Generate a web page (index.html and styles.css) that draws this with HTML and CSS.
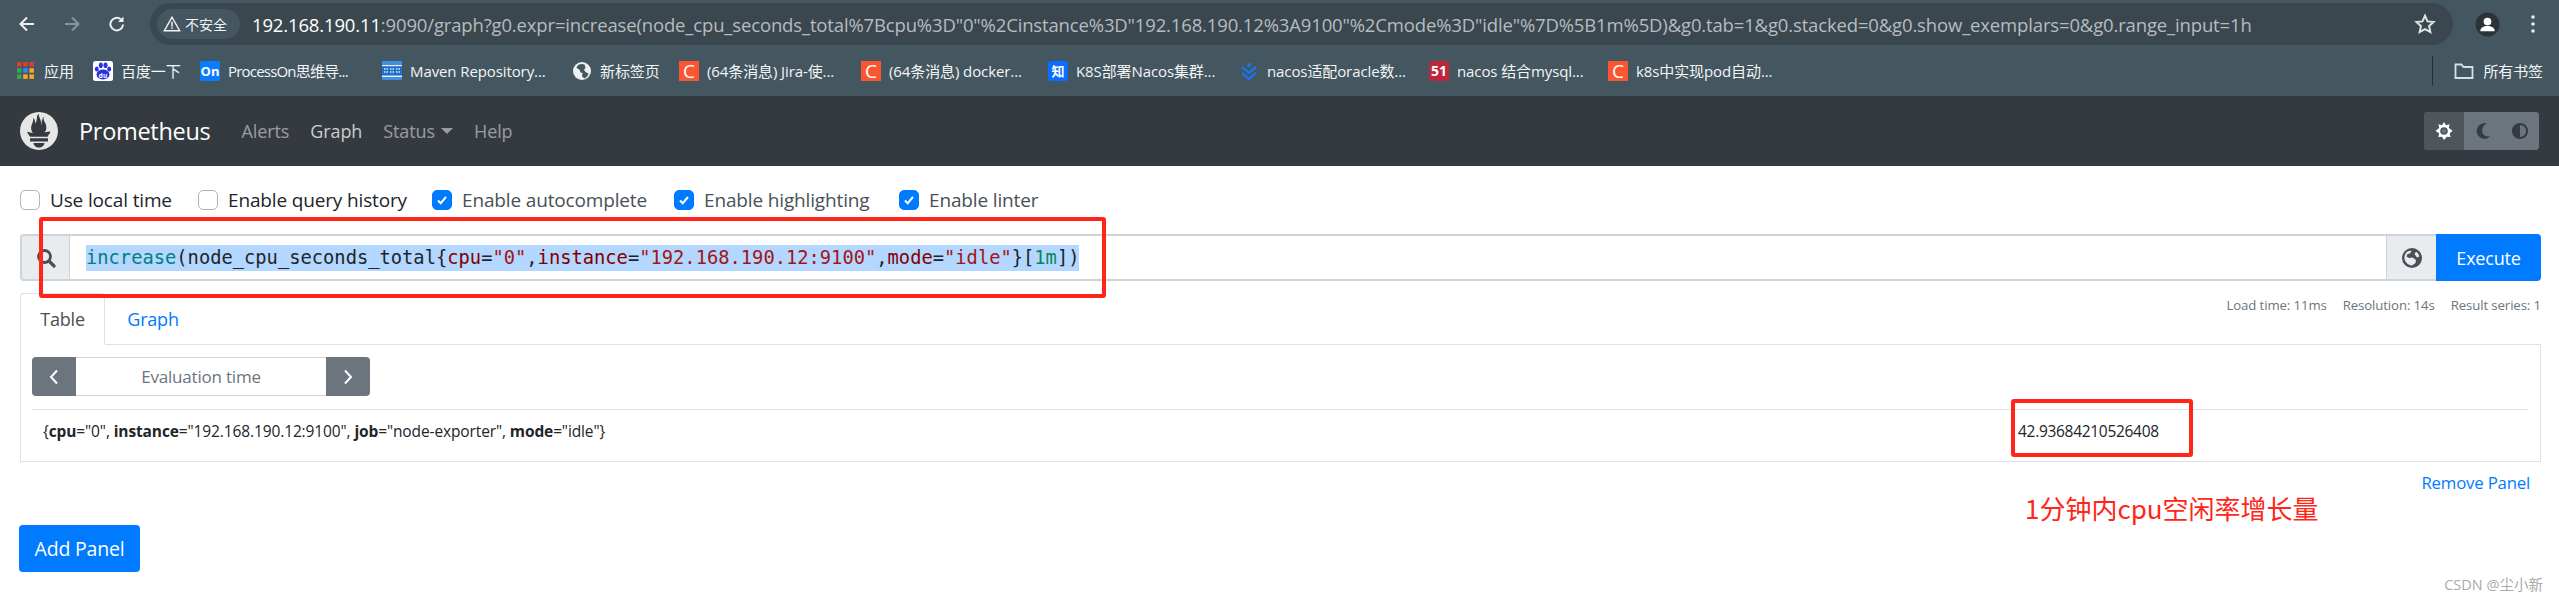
FILE: index.html
```html
<!DOCTYPE html>
<html lang="zh">
<head>
<meta charset="utf-8">
<title>Prometheus Time Series Collection and Processing Server</title>
<link rel="stylesheet" href="styles.css">
</head>
<body>
<header class="chrome-toolbar">
  <div class="chrome-nav">
    <svg class="chrome-icon" viewBox="0 0 20 20"><path d="M17 10H4M10 3.500 3.500 10l6.500 6.500" fill="none" stroke="#eef1f2" stroke-width="2"/></svg>
    <svg class="chrome-icon" viewBox="0 0 20 20"><path d="M3 10h13M10 3.500l6.500 6.500-6.500 6.500" fill="none" stroke="#8a9499" stroke-width="2"/></svg>
    <svg class="chrome-icon" viewBox="0 0 20 20"><path d="M16 10.500a6.300 6.300 0 1 1-2-5" fill="none" stroke="#eef1f2" stroke-width="2"/><path d="M16.500 2.500v5.500h-5.500z" fill="#eef1f2"/></svg>
  </div>
  <div class="omnibox">
    <div class="secure-chip">
      <svg class="warn-icon" viewBox="0 0 20 20"><path d="M10 2.500 18.500 17.500H1.500z" fill="none" stroke="#f1f3f4" stroke-width="1.600"/><path d="M9.200 7.500h1.600v5.500H9.200zM9.200 14h1.600v1.600H9.200z" fill="#f1f3f4"/></svg>
      <span>不安全</span>
    </div>
    <div class="url"><span class="url-host">192.168.190.11</span>:9090/graph?g0.expr=increase(node_cpu_seconds_total%7Bcpu%3D"0"%2Cinstance%3D"192.168.190.12%3A9100"%2Cmode%3D"idle"%7D%5B1m%5D)&amp;g0.tab=1&amp;g0.stacked=0&amp;g0.show_exemplars=0&amp;g0.range_input=1h</div>
    <svg class="star-icon" viewBox="0 0 20 20"><path d="M10 2.500l2.300 5.100 5.500.6-4.100 3.700 1.200 5.500L10 14.600l-4.900 2.800 1.200-5.500-4.100-3.700 5.500-.6z" fill="none" stroke="#dfe3e5" stroke-width="1.800"/></svg>
  </div>
  <div class="chrome-end">
    <svg class="avatar" viewBox="0 0 26 26"><circle cx="13" cy="13" r="12.500" fill="#2b3338"/><circle cx="13" cy="10" r="4" fill="#fff"/><path d="M5.500 20c0-4 3.500-5.500 7.500-5.500s7.500 1.500 7.500 5.500z" fill="#fff"/></svg>
    <svg class="menu-dots" viewBox="0 0 6 22"><circle cx="3" cy="4" r="1.800" fill="#e8eaed"/><circle cx="3" cy="11" r="1.800" fill="#e8eaed"/><circle cx="3" cy="18" r="1.800" fill="#e8eaed"/></svg>
  </div>
</header>

<nav class="bookmarks">
  <div class="bm-list">
    <a class="bm"><svg class="bm-apps" viewBox="0 0 17 17"><rect x="0" y="0" width="4.500" height="4.500" fill="#e53935"/><rect x="6.200" y="0" width="4.500" height="4.500" fill="#e53935"/><rect x="12.400" y="0" width="4.500" height="4.500" fill="#e53935"/><rect x="0" y="6.200" width="4.500" height="4.500" fill="#34a853"/><rect x="6.200" y="6.200" width="4.500" height="4.500" fill="#2d8cf0"/><rect x="12.400" y="6.200" width="4.500" height="4.500" fill="#f9a825"/><rect x="0" y="12.400" width="4.500" height="4.500" fill="#34a853"/><rect x="6.200" y="12.400" width="4.500" height="4.500" fill="#f9a825"/><rect x="12.400" y="12.400" width="4.500" height="4.500" fill="#f9a825"/></svg><span>应用</span></a>
    <a class="bm"><svg class="bm-icon" viewBox="0 0 20 20"><rect width="20" height="20" rx="2.500" fill="#fff"/><ellipse cx="10" cy="13.500" rx="6.500" ry="5" fill="#2932e1"/><ellipse cx="3.800" cy="8" rx="2" ry="2.600" fill="#2932e1"/><ellipse cx="7.800" cy="4.200" rx="2" ry="2.800" fill="#2932e1"/><ellipse cx="12.500" cy="4.200" rx="2" ry="2.800" fill="#2932e1"/><ellipse cx="16.200" cy="8" rx="2" ry="2.600" fill="#2932e1"/><text class="du" x="10" y="16.500" text-anchor="middle">du</text></svg><span>百度一下</span></a>
    <a class="bm"><span class="tile tile-blue">On</span><span class="bm-tight">ProcessOn思维导...</span></a>
    <a class="bm"><svg class="bm-icon" viewBox="0 0 20 20"><rect y="0" width="20" height="4" fill="#3f8fe0"/><rect y="4" width="20" height="1.500" fill="#e6eef5"/><rect y="5.500" width="20" height="9" fill="#1a6fd0"/><path d="M2 8h4M8 8h4M14 8h4M2 11h4M8 11h4M14 11h4" stroke="#a5cdf2" stroke-width="2" stroke-dasharray="1.500 1"/><rect y="14.500" width="20" height="1.500" fill="#e6eef5"/><rect y="16" width="20" height="3" fill="#3f8fe0"/></svg><span>Maven Repository...</span></a>
    <a class="bm"><svg class="bm-icon" viewBox="0 0 20 20"><circle cx="10" cy="10" r="9" fill="#eef1f2"/><path d="M10 3c-3 0-5 1.500-5.500 4l3 1.500 1 3 2 .5-.5 3.500 2.500 2c2-1 3.500-3 4-5l-3-1.500-1.500-2 1.500-2.500-1-3z" fill="#44565f"/></svg><span>新标签页</span></a>
    <a class="bm"><span class="tile tile-orange">C</span><span>(64条消息) Jira-使...</span></a>
    <a class="bm"><span class="tile tile-orange">C</span><span>(64条消息) docker...</span></a>
    <a class="bm"><span class="tile tile-zhihu">知</span><span>K8S部署Nacos集群...</span></a>
    <a class="bm"><svg class="bm-icon" viewBox="0 0 20 20"><path d="M3 6l7 6 7-6M3 12l7 6 7-6" fill="none" stroke="#1b74e8" stroke-width="2.400"/><circle cx="10" cy="4" r="2" fill="#1b74e8"/></svg><span>nacos适配oracle数...</span></a>
    <a class="bm"><span class="tile tile-red">51</span><span>nacos 结合mysql...</span></a>
    <a class="bm"><span class="tile tile-orange">C</span><span>k8s中实现pod自动...</span></a>
  </div>
  <div class="bm-all">
    <svg class="folder" viewBox="0 0 20 20"><path d="M1.500 3.500h6l2 2.500h9v11h-17z" fill="none" stroke="#d9dee0" stroke-width="1.800"/></svg>
    <span>所有书签</span>
  </div>
</nav>

<nav class="navbar">
  <svg class="logo" viewBox="0 0 100 100"><path fill="#e6e6e6" fill-rule="evenodd" d="M50 0C22.400 0 0 22.400 0 50s22.400 50 50 50 50-22.400 50-50S77.600 0 50 0zm0 93.600c-7.900 0-14.300-5.300-14.300-11.800h28.600c0 6.500-6.400 11.800-14.300 11.800zm23.600-15.700H26.400v-8.600h47.200v8.600zm-.2-13H26.500c-.2-.2-.3-.4-.5-.5-4.800-5.900-6-9-7.100-12.100 0 0 5.900 1.200 10 2.200 0 0 2.100.5 5.300 1.100-3.100-3.600-4.900-8.200-4.900-12.900 0-10.400 8-19.500 5.100-26.800 2.800.2 5.800 5.900 6 14.800 2.900-4 4.200-11.400 4.200-15.900 0-4.600 3-10 6.100-10.200-2.700 4.400.7 8.200 3.700 17.600 1.100 3.500 1 9.400 1.900 13.200.3-7.800 1.600-19.100 6.600-23.100-2.200 5 .3 11.200 2 14.200 2.700 4.700 4.400 8.300 4.400 15 0 4.500-1.700 8.800-4.500 12.200 3.200-.6 5.500-1.100 5.500-1.100l10.200-2c-.1 0-1.600 6.200-7.200 12.400z"/></svg>
  <a class="brand">Prometheus</a>
  <div class="nav-links">
    <a class="nav-link">Alerts</a>
    <a class="nav-link nav-active">Graph</a>
    <a class="nav-link">Status<i class="caret"></i></a>
    <a class="nav-link">Help</a>
  </div>
  <div class="theme-group">
    <button class="theme-btn theme-on"><svg class="theme-icon" viewBox="0 0 20 20"><path fill="#fff" fill-rule="evenodd" d="M10 0l2.200 3.600 4-1-.9 4L19.500 9.800l-3.200 3 1 4-4.100-.3L10 20l-2.200-3.500-4.100.3 1-4L.5 9.800l4.200-3.200-.9-4 4 1zM10 5.800a4.200 4.200 0 1 0 0 8.400 4.200 4.200 0 0 0 0-8.400z"/><circle cx="10" cy="10" r="2.400" fill="#6c757d"/></svg></button>
    <button class="theme-btn"><svg class="theme-icon" viewBox="0 0 20 20"><path fill="#343a40" d="M11.500 1.500a8.500 8.500 0 1 0 6.500 14c-.8.300-1.700.4-2.500.4-3.700 0-6.500-2.900-6.500-6.500 0-3.300 2.100-6.300 5-7.400-.8-.3-1.600-.5-2.500-.5z"/></svg></button>
    <button class="theme-btn"><svg class="theme-icon" viewBox="0 0 20 20"><path fill="#343a40" fill-rule="evenodd" d="M10 1a9 9 0 1 0 0 18 9 9 0 0 0 0-18zm0 2.200a6.800 6.800 0 0 1 0 13.600z"/></svg></button>
  </div>
</nav>

<main class="page">
  <div class="options">
    <label class="opt"><span class="box"></span><span>Use local time</span></label>
    <label class="opt"><span class="box"></span><span>Enable query history</span></label>
    <label class="opt opt-on"><span class="box box-on"><svg class="tick" viewBox="0 0 12 12"><path d="M2 6.500l2.700 2.700L10 3" fill="none" stroke="#fff" stroke-width="2"/></svg></span><span>Enable autocomplete</span></label>
    <label class="opt opt-on"><span class="box box-on"><svg class="tick" viewBox="0 0 12 12"><path d="M2 6.500l2.700 2.700L10 3" fill="none" stroke="#fff" stroke-width="2"/></svg></span><span>Enable highlighting</span></label>
    <label class="opt opt-on"><span class="box box-on"><svg class="tick" viewBox="0 0 12 12"><path d="M2 6.500l2.700 2.700L10 3" fill="none" stroke="#fff" stroke-width="2"/></svg></span><span>Enable linter</span></label>
  </div>

  <div class="query">
    <div class="addon addon-left"><svg class="addon-icon" viewBox="0 0 20 20"><circle cx="8.500" cy="8.500" r="6" fill="none" stroke="#495057" stroke-width="2.800"/><path d="M13 13l5 5" stroke="#495057" stroke-width="3.200" stroke-linecap="round"/></svg></div>
    <div class="expr"><span class="sel"><span class="t-fn">increase</span>(node_cpu_seconds_total{<span class="t-lbl">cpu</span>=<span class="t-str">"0"</span>,<span class="t-lbl">instance</span>=<span class="t-str">"192.168.190.12:9100"</span>,<span class="t-lbl">mode</span>=<span class="t-str">"idle"</span>}[<span class="t-dur">1m</span>])</span></div>
    <div class="addon addon-right"><svg class="addon-icon" viewBox="0 0 20 20"><path fill="#495057" fill-rule="evenodd" d="M10 0a10 10 0 1 0 0 20 10 10 0 0 0 0-20zM2.500 11c-.6-3 1-6 3-7.500 1.500-.8 3-1 4-.5L8 5.500 5.500 6 4.500 8.500 7 10l3.500-.5 3.500 2.500-.5 3-3.500 2.500c-4-.3-6.500-3-7.500-6.500zM12.500 6l1.500-2.200c1.800 1 3 2.800 3.300 4.700L15 9.500z"/></svg></div>
    <button class="execute">Execute</button>
  </div>

  <div class="tabs-row">
    <div class="tabs">
      <a class="tab tab-on">Table</a>
      <a class="tab">Graph</a>
    </div>
    <div class="stats"><span>Load time: 11ms</span><span>Resolution: 14s</span><span>Result series: 1</span></div>
  </div>

  <section class="panel">
    <div class="evalbar">
      <button class="step"><svg class="chev" viewBox="0 0 10 16"><path d="M8 1.500 2 8l6 6.500" fill="none" stroke="#fff" stroke-width="2"/></svg></button>
      <div class="evaltime">Evaluation time</div>
      <button class="step"><svg class="chev" viewBox="0 0 10 16"><path d="M2 1.500 8 8l-6 6.500" fill="none" stroke="#fff" stroke-width="2"/></svg></button>
    </div>
    <div class="result">
      <div class="metric">{<b>cpu</b>="0", <b>instance</b>="192.168.190.12:9100", <b>job</b>="node-exporter", <b>mode</b>="idle"}</div>
      <div class="value">42.93684210526408</div>
    </div>
  </section>

  <div class="remove-row"><a class="remove">Remove Panel</a></div>
  <button class="add">Add Panel</button>
</main>

<div class="mark mark-query"></div>
<div class="mark mark-value"></div>
<div class="note">1分钟内cpu空闲率增长量</div>
<div class="watermark">CSDN @尘小新</div>
</body>
</html>
```
FILE: styles.css
```css
* { box-sizing: border-box; }
html, body { margin: 0; padding: 0; }
body {
  position: relative;
  width: 2559px;
  height: 601px;
  overflow: hidden;
  background: #fff;
  color: #212529;
  font-family: "Open Sans", "Noto Sans CJK SC", sans-serif;
}
button { font-family: inherit; border: 0; padding: 0; }

.chrome-toolbar {
  height: 45px;
  padding: 3px 0 0 0;
  display: flex;
  background: #44565f;
}
.chrome-nav {
  width: 150px;
  padding-left: 17px;
  display: flex;
  gap: 25px;
  align-items: center;
}
.chrome-icon { width: 20px; height: 20px; }
.omnibox {
  width: 2303px;
  height: 42px;
  display: flex;
  align-items: center;
  padding: 0 17px 0 7px;
  background: #3a474e;
  border-radius: 21px;
  color: #b5bcc0;
}
.secure-chip {
  width: 83px;
  height: 30px;
  display: flex;
  align-items: center;
  gap: 4px;
  padding-left: 6px;
  background: #44565f;
  border-radius: 15px;
  font-size: 14px;
  color: #f1f3f4;
}
.warn-icon { width: 18px; height: 18px; }
.url {
  flex: 1;
  margin-left: 12px;
  font-size: 18.500px;
  letter-spacing: -0.15px;
  white-space: nowrap;
}
.url-host { color: #fff; }
.star-icon { width: 22px; height: 22px; }
.chrome-end {
  flex: 1;
  display: flex;
  align-items: center;
  padding: 0 0 0 22px;
  gap: 30px;
}
.avatar { width: 25px; height: 25px; }
.menu-dots { width: 6px; height: 22px; }

.bookmarks {
  height: 51px;
  display: flex;
  justify-content: space-between;
  align-items: center;
  padding: 0 16px 0 16px;
  background: #44565f;
  font-size: 15px;
  letter-spacing: -0.1px;
  color: #f3f5f6;
}
.bm-list {
  display: grid;
  grid-template-columns: 77px 107px 182px 190px 107px 182px 187px 191px 190px 179px 170px;
}
.bm { display: flex; align-items: center; gap: 8px; white-space: nowrap; }
.bm-tight { letter-spacing: -0.8px; }
.bm-icon { width: 20px; height: 20px; flex: none; }
.bm-apps { width: 17px; height: 17px; margin: 0 2px 0 1px; flex: none; }
.du { font-size: 6.500px; font-weight: 700; fill: #fff; font-family: "Open Sans", sans-serif; letter-spacing: 0; }
.tile {
  width: 20px;
  height: 20px;
  flex: none;
  display: flex;
  align-items: center;
  justify-content: center;
  font-size: 13px;
  font-weight: 700;
  color: #fff;
  letter-spacing: 0;
}
.tile-blue { background: #0a7cff; border-radius: 2px; }
.tile-orange { background: #fc5531; font-size: 19px; font-weight: 400; }
.tile-zhihu { background: #0a6dff; border-radius: 3px; }
.tile-red { background: #c0263a; border-radius: 3px; font-size: 14px; }
.bm-all {
  display: flex;
  align-items: center;
  gap: 9px;
  height: 30px;
  padding-left: 21px;
  border-left: 1px solid #262e33;
}
.folder { width: 20px; height: 20px; }

.navbar {
  height: 70px;
  display: flex;
  align-items: center;
  padding: 0 20px 0 20px;
  background: #343a40;
  color: #fff;
}
.logo { width: 38px; height: 38px; flex: none; }
.brand { margin-left: 21px; font-size: 23.500px; letter-spacing: -0.3px; color: #fff; }
.nav-links { display: flex; gap: 21px; margin-left: 31px; font-size: 18px; letter-spacing: -0.1px; flex: 1; }
.nav-link { color: rgba(255, 255, 255, .5); display: flex; align-items: center; }
.nav-active { color: rgba(255, 255, 255, .75); }
.caret {
  margin-left: 6px;
  border-top: 6px solid rgba(255, 255, 255, .5);
  border-left: 6px solid transparent;
  border-right: 6px solid transparent;
}
.theme-group {
  display: flex;
  height: 38px;
  border-radius: 4px;
  overflow: hidden;
  background: #6c757d;
}
.theme-btn {
  width: 37.500px;
  display: flex;
  align-items: center;
  justify-content: center;
  background: #6c757d;
}
.theme-on { width: 40px; background: #4e555b; }
.theme-icon { width: 18px; height: 18px; }

.page { padding: 0 18px 0 20px; }
.options {
  height: 68px;
  display: grid;
  grid-template-columns: 178px 234px 242px 225px 200px;
  align-items: center;
  font-size: 19px;
  letter-spacing: -0.15px;
}
.opt { display: flex; align-items: center; gap: 10px; }
.opt-on { color: #495057; }
.box {
  width: 20px;
  height: 20px;
  flex: none;
  background: #fff;
  border: 1px solid #adb5bd;
  border-radius: 5px;
}
.box-on {
  display: flex;
  align-items: center;
  justify-content: center;
  background: #007bff;
  border-color: #007bff;
}
.tick { width: 12px; height: 12px; }

.query { height: 47px; display: flex; }
.addon {
  width: 50px;
  display: flex;
  align-items: center;
  justify-content: center;
  background: #e9ecef;
  border: 2px solid #ced4da;
}
.addon-left { border-radius: 4px 0 0 4px; border-right-width: 1px; }
.addon-right { border-right: 0; border-left-width: 1px; }
.addon-icon { width: 20px; height: 20px; }
.expr {
  flex: 1;
  display: flex;
  align-items: center;
  padding-left: 16px;
  border-top: 2px solid #ced4da;
  border-bottom: 2px solid #ced4da;
  font-family: "DejaVu Sans Mono", monospace;
  font-size: 18.750px;
  white-space: pre;
}
.sel { background: #b3d7ff; line-height: 26px; }
.t-fn { color: #008080; }
.t-lbl { color: #800000; }
.t-str { color: #a31515; }
.t-dur { color: #098658; }
.execute {
  width: 105px;
  background: #007bff;
  border-radius: 0 4px 4px 0;
  color: #fff;
  font-size: 18px;
  letter-spacing: -0.2px;
}

.tabs-row { height: 63px; padding-top: 12px; display: flex; justify-content: space-between; }
.tabs { display: flex; }
.tab {
  width: 85px;
  height: 51px;
  display: flex;
  align-items: center;
  justify-content: center;
  font-size: 18px;
  letter-spacing: -0.2px;
  color: #007bff;
}
.tab + .tab { width: 96px; }
.tab-on {
  color: #495057;
  background: #fff;
  border: 1px solid #dee2e6;
  border-bottom: 0;
  border-radius: 4px 4px 0 0;
}
.stats {
  display: flex;
  gap: 16px;
  padding-top: 3px;
  font-size: 13.200px;
  letter-spacing: -0.1px;
  color: #6c757d;
}

.panel {
  height: 118px;
  padding: 12px 12px 0 11px;
  border: 1px solid #dee2e6;
  border-top: 0;
  position: relative;
}
.panel::before {
  content: "";
  position: absolute;
  top: 0;
  left: 84px;
  right: -1px;
  height: 1px;
  background: #dee2e6;
}
.evalbar {
  width: 338px;
  height: 39px;
  display: flex;
  margin-top: 1px;
}
.step {
  width: 44px;
  display: flex;
  align-items: center;
  justify-content: center;
  background: #6c757d;
}
.step:first-child { border-radius: 4px 0 0 4px; }
.step:last-child { border-radius: 0 4px 4px 0; }
.chev { width: 10px; height: 16px; }
.evaltime {
  flex: 1;
  display: flex;
  align-items: center;
  justify-content: center;
  border-top: 1px solid #ced4da;
  border-bottom: 1px solid #ced4da;
  font-size: 17px;
  letter-spacing: -0.2px;
  color: #6c757d;
}
.result {
  margin-top: 13px;
  height: 52px;
  border-top: 1px solid #dee2e6;
  display: flex;
  align-items: center;
  padding: 0 0 9px 11px;
  font-size: 15.500px;
  color: #212529;
  white-space: nowrap;
}
.metric { width: 1975px; letter-spacing: -0.12px; }
.value { letter-spacing: -0.3px; }

.remove-row { height: 40px; display: flex; justify-content: flex-end; align-items: center; padding-right: 11px; }
.remove { color: #007bff; font-size: 16.800px; letter-spacing: -0.2px; }
.add {
  display: block;
  width: 121px;
  height: 47px;
  margin-top: 23px;
  margin-left: -1px;
  background: #007bff;
  border-radius: 4px;
  color: #fff;
  font-size: 19.500px;
  letter-spacing: -0.2px;
}

.mark {
  position: absolute;
  border: 4px solid #ff2518;
  border-radius: 3px;
}
.mark-query { left: 39px; top: 217px; width: 1067px; height: 81px; }
.mark-value { left: 2011px; top: 399px; width: 182px; height: 58px; }
.note {
  position: absolute;
  left: 2025px;
  top: 490px;
  font-size: 26px;
  line-height: 36px;
  color: #ff2518;
  font-family: "Noto Sans CJK SC", sans-serif;
  white-space: nowrap;
}
.watermark {
  position: absolute;
  right: 16px;
  top: 576px;
  font-size: 14.500px;
  line-height: 18px;
  color: #a9a9a9;
  white-space: nowrap;
}
```
